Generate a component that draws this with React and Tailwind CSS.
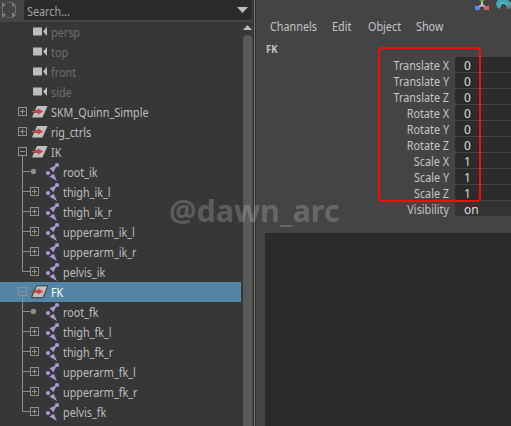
const rows = [
  { t: 'persp', k: 'cam' },
  { t: 'top', k: 'cam' },
  { t: 'front', k: 'cam' },
  { t: 'side', k: 'cam' },
  { t: 'SKM_Quinn_Simple', k: 'group', box: '+' },
  { t: 'rig_ctrls', k: 'group', box: '+' },
  { t: 'IK', k: 'group', box: '-' },
  { t: 'root_ik', k: 'joint', dot: true },
  { t: 'thigh_ik_l', k: 'joint' },
  { t: 'thigh_ik_r', k: 'joint' },
  { t: 'upperarm_ik_l', k: 'joint' },
  { t: 'upperarm_ik_r', k: 'joint' },
  { t: 'pelvis_ik', k: 'joint', last: true },
  { t: 'FK', k: 'group', box: '-', sel: true },
  { t: 'root_fk', k: 'joint', dot: true },
  { t: 'thigh_fk_l', k: 'joint' },
  { t: 'thigh_fk_r', k: 'joint' },
  { t: 'upperarm_fk_l', k: 'joint' },
  { t: 'upperarm_fk_r', k: 'joint' },
  { t: 'pelvis_fk', k: 'joint', last: true },
];

const channels = [
  ['Translate X', '0'],
  ['Translate Y', '0'],
  ['Translate Z', '0'],
  ['Rotate X', '0'],
  ['Rotate Y', '0'],
  ['Rotate Z', '0'],
  ['Scale X', '1'],
  ['Scale Y', '1'],
  ['Scale Z', '1'],
  ['Visibility', 'on'],
];

function RowIcon({ r }) {
  return (
    <svg width="63" height="20" viewBox="0 0 63 20" className="shrink-0">
      {r.k === 'cam' && (
        <g fill="#bdbdbd">
          <rect x="33" y="5.5" width="9" height="8" rx="0.8" />
          <path d="M43 9.5L47 5v9z" />
        </g>
      )}
      {r.k === 'group' && (
        <g>
          <g stroke="#8f8f8f" fill="none">
            <rect x="18.5" y="5.5" width="8" height="8" />
            <path d="M20 9.5h5" />
            {r.box === '+' && <path d="M22.5 7v5" />}
            {r.box === '-' && <path d="M22.5 14v6" />}
          </g>
          <path
            d={r.sel ? 'M36.5 3.8H48L43 15.7H31.5z' : 'M37 4H47.5L42.5 15.4H32z'}
            fill="#c0c0c0"
            stroke={r.sel ? '#30363a' : 'none'}
          />
          <path d="M31.5 9.5h7" stroke={r.sel ? '#5b4a4e' : '#4b3c3c'} strokeWidth="2.4" />
          <path d="M32 9.5h8" stroke="#d43f42" strokeWidth="1.6" />
          <path d="M37.8 6.2L43.2 9.5L37.8 12.8z" fill="#d43f42" />
        </g>
      )}
      {r.k === 'joint' && (
        <g>
          <path
            d={r.last ? 'M22.5 0v9.5H30' : 'M22.5 0v20M22.5 9.5H30'}
            stroke="#8f8f8f"
            fill="none"
          />
          {r.dot ? (
            <circle cx="33.4" cy="9.5" r="2.7" fill="#8f8f8f" />
          ) : (
            <g stroke="#8f8f8f" fill="none">
              <rect x="30.5" y="5.5" width="8" height="8" />
              <path d="M32 9.5h5M34.5 7v5" />
            </g>
          )}
          <g fill="#ac98d8">
            <circle cx="57" cy="3" r="2.1" />
            <circle cx="48" cy="11" r="2.1" />
            <path d="M49.6 6.2L53.4 10.2L57 3z" />
            <path d="M49.4 14.6L53.6 11.8L57 19z" />
          </g>
        </g>
      )}
    </svg>
  );
}

function Row({ r }) {
  const color = r.sel ? 'text-white' : r.k === 'cam' ? 'text-[#6e6e6e]' : 'text-[#bdbdbd]';
  return (
    <div className={`flex h-5 shrink-0 ${r.sel ? 'bg-[#5285a6]' : ''}`}>
      <RowIcon r={r} />
      <span className={`${r.k === 'joint' ? '' : '-ml-3'} origin-left scale-x-90 whitespace-pre pt-px leading-5 ${color}`}>{r.t}</span>
    </div>
  );
}

export default function App() {
  return (
    <div className="relative flex h-[426px] w-[511px] overflow-hidden bg-[#444444] font-['Noto_Sans','Open_Sans',sans-serif] text-[12px] text-[#c4c4c4]">
      <div className="flex w-[252px] shrink-0 flex-col">
        <div className="flex h-[22px] shrink-0 items-start">
          <svg width="24" height="20" viewBox="0 0 24 20" fill="none" stroke="#7c7c7c">
            <path d="M2.5 6v8M15.5 6v8" strokeDasharray="3 1" />
            <path d="M6 2.5h6M6 17.5h6" stroke="#666666" />
            <path d="M2 2l4 3-4 2zM12 2l4 3-4 2zM2 12l4 3-4 3zM12 12l4 3-4 3z" fill="#7c7c7c" stroke="none" />
          </svg>
          <div className="flex h-5 flex-1 items-center justify-between rounded-[2px] bg-[#2b2b2b] pr-1 pl-[3px] text-[#a2a2a2]">
            <span className="origin-left scale-x-90 pt-[3px]">Search...</span>
            <svg width="11" height="6" viewBox="0 0 11 6"><path d="M0 0h11L5.5 6z" fill="#bdbdbd" /></svg>
          </div>
        </div>
        <div className="flex min-h-0 flex-1 bg-[#373737]">
          <div className="mr-[2px] flex w-[241px] flex-col">
            {rows.map((r) => <Row key={r.t} r={r} />)}
          </div>
          <div className="flex flex-1 flex-col">
            <svg width="9" height="13" viewBox="0 0 9 13"><path d="M0 8h9L4.5 3z" fill="#bdbdbd" /></svg>
            <div className="flex-1 rounded-t-[4px] bg-[#595959]" />
          </div>
        </div>
      </div>
      <div className="ml-px flex w-[3px] shrink-0 border-x border-x-[#2f2f2f] bg-[#777777]" />
      <div className="flex min-w-0 flex-1 flex-col pl-[9px]">
        <div className="flex h-[11px] shrink-0 justify-end">
          <svg width="38" height="11" viewBox="473 0 38 11">
            <path d="M479 0h6l-3 2z" fill="#74a83b" />
            <path d="M482 1.5v4M482 5l-4 2.5M482 5l4 2.5" stroke="#c8c8c8" strokeWidth="2" />
            <path d="M475 5.5l4.5 1L480 10h-5z" fill="#5589ee" />
            <path d="M489 5.5l-4.5 1L484 10h5z" fill="#e05b60" />
            <path d="M496 3l2-3h10l3 3v3l-4 1q0-3-4-3q-3 0-3 5q-4-1-4-6z" fill="#3da6b1" />
            <path d="M500 7l1-4h4l2 3" fill="none" stroke="#78c5cc" />
            <path d="M506 8l5-4v4l-3 1z" fill="#787878" />
          </svg>
        </div>
        <div className="flex h-[31px] shrink-0 pl-[5px] leading-[31px]">
          <span className="w-[62px] origin-left scale-x-90">Channels</span>
          <span className="w-9 origin-left scale-x-90">Edit</span>
          <span className="w-12 origin-left scale-x-90">Object</span>
          <span className="origin-left scale-x-90">Show</span>
        </div>
        <div className="h-[15px] shrink-0 origin-left scale-x-95 pl-px text-[10px] font-bold leading-[15px]">FK</div>
        <div className="flex h-[176px] shrink-0 flex-col">
          {channels.map(([n, v]) => (
            <div key={n} className="flex h-4 leading-[18px]">
              <span className="mr-[6px] w-[184px] origin-right scale-x-90 text-right">{n}</span>
              <span className={`h-[15px] flex-1 rounded-l-[2px] pl-[9px] text-[#dddddd] ${v === 'on' ? 'bg-[#333333]' : 'bg-[#2b2b2b]'}`}>{v}</span>
            </div>
          ))}
        </div>
        <div className="flex-1 bg-[#2b2b2b]" />
      </div>
      <div className="absolute top-[47px] left-[378px] h-[155px] w-[103px] rounded-[4px] border-2 border-[#fa0a0a]" />
      <div className="absolute top-[191px] left-[169px] text-[30.5px] font-bold leading-[38px] text-white/20">@dawn_arc</div>
    </div>
  );
}
